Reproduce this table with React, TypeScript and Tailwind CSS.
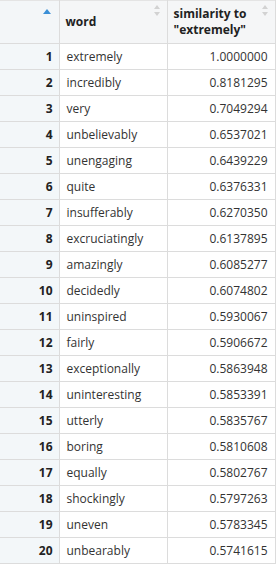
import React from "react";

const rows: [string, string][] = [
  ["extremely", "1.0000000"],
  ["incredibly", "0.8181295"],
  ["very", "0.7049294"],
  ["unbelievably", "0.6537021"],
  ["unengaging", "0.6439229"],
  ["quite", "0.6376331"],
  ["insufferably", "0.6270350"],
  ["excruciatingly", "0.6137895"],
  ["amazingly", "0.6085277"],
  ["decidedly", "0.6074802"],
  ["uninspired", "0.5930067"],
  ["fairly", "0.5906672"],
  ["exceptionally", "0.5863948"],
  ["uninteresting", "0.5853391"],
  ["utterly", "0.5835767"],
  ["boring", "0.5810608"],
  ["equally", "0.5802767"],
  ["shockingly", "0.5797263"],
  ["uneven", "0.5783345"],
  ["unbearably", "0.5741615"],
];

const SortBoth = () => (
  <svg width="6" height="11" viewBox="0 0 6 11" className="absolute top-[4px] right-[7px]">
    <path d="M3 0 L6 4 L0 4 Z" fill="#d2d2d2" />
    <path d="M3 11 L6 7 L0 7 Z" fill="#d2d2d2" />
  </svg>
);

const SortUp = () => (
  <svg width="8" height="5" viewBox="0 0 8 5" className="absolute top-[8px] right-[8px]">
    <path d="M4 0 L8 5 L0 5 Z" fill="#3b8fd6" />
  </svg>
);

const App = () => {
  return (
    <div className="w-[278px] h-[565px] bg-white overflow-hidden font-['Open_Sans','Noto_Sans',sans-serif] text-[12px] text-[#333]">
      <table className="border-collapse table-fixed w-[275px]">
        <colgroup>
          <col className="w-[59px]" />
          <col className="w-[108px]" />
          <col className="w-[108px]" />
        </colgroup>
        <thead>
          <tr className="h-[43px] bg-[#f5f6f7] border-t border-[#e4e4e4]">
            <th className="relative border-r border-b border-[#dcdcdc] bg-[#f3f6f8]">
              <SortUp />
            </th>
            <th className="relative border-r border-b border-[#dcdcdc] text-left font-bold text-[#222] px-[6px] leading-[16px]">
              word
              <SortBoth />
            </th>
            <th className="relative border-r border-b border-[#dcdcdc] text-left font-bold text-[#222] px-[6px] leading-[16px]">
              similarity to
              <br />
              "extremely"
              <SortBoth />
            </th>
          </tr>
        </thead>
        <tbody>
          {rows.map(([w, v], i) => (
            <tr key={w} className="h-[26px]">
              <td className="border-r border-b border-[#dcdcdc] bg-[#f3f7f9] text-right font-bold text-[#222] pr-[6px]">
                {i + 1}
              </td>
              <td className="border-r border-b border-[#dcdcdc] px-[7px]">{w}</td>
              <td className="border-r border-b border-[#dcdcdc] text-right pr-[7px]">{v}</td>
            </tr>
          ))}
        </tbody>
      </table>
    </div>
  );
};

export default App;
